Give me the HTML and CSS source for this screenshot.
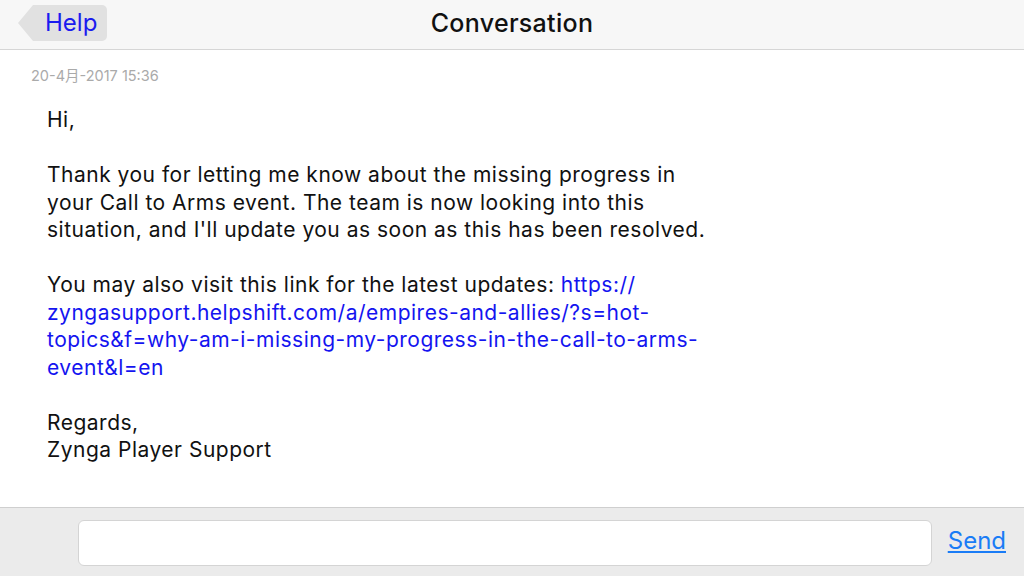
FILE: index.html
```html
<!DOCTYPE html>
<html>
  <head>
    <title>Conversation</title>
    <link rel="stylesheet" href="styles.css">
  </head>
  <body>
    <div class="page">
      <header class="topbar">
        <a class="backBtn" href="#">Help</a>
        <h1>Conversation</h1>
      </header>
      <section class="thread">
        <div class="stamp">20-4月-2017 15:36</div>
        <div class="message">
          <p>Hi,</p>
          <p>Thank you for letting me know about the missing progress in<br>
          your Call to Arms event. The team is now looking into this<br>
          situation, and I'll update you as soon as this has been resolved.</p>
          <p>You may also visit this link for the latest updates: <a href="#">https://<br>
          zyngasupport.helpshift.com/a/empires-and-allies/?s=hot-<br>
          topics&amp;f=why-am-i-missing-my-progress-in-the-call-to-arms-<br>
          event&amp;l=en</a></p>
          <p>Regards,<br>
          Zynga Player Support</p>
        </div>
      </section>
      <footer class="composer">
        <input type="text" class="replyBox">
        <a class="sendBtn" href="#">Send</a>
      </footer>
    </div>
  </body>
</html>
```

FILE: styles.css
```css
body {
  margin: 0;
  font-family: 'Inter', 'Liberation Sans', 'Noto Sans CJK SC', sans-serif;
  background: #fff;
}
.page {
  display: flex;
  flex-direction: column;
  height: 576px;
}
.topbar {
  height: 49px;
  flex: none;
  background: #f7f7f7;
  border-bottom: 1px solid #d6d6d6;
  display: flex;
  align-items: center;
  position: relative;
}
.topbar h1 {
  position: absolute;
  left: 0;
  right: 0;
  top: 0;
  margin: 0;
  line-height: 47px;
  text-align: center;
  font-size: 25px;
  font-weight: 500;
  letter-spacing: 0.3px;
  color: #111;
  pointer-events: none;
}
.backBtn {
  position: relative;
  z-index: 1;
  margin-left: 33px;
  margin-top: -4px;
  height: 36px;
  line-height: 36px;
  padding: 0 10px 0 12px;
  background: #e1e1e1;
  border-radius: 0 5px 5px 0;
  color: #1b1bef;
  font-size: 24px;
  text-decoration: none;
}
.backBtn::before {
  content: "";
  position: absolute;
  left: -15px;
  top: 0;
  border-right: 15px solid #e1e1e1;
  border-top: 18px solid transparent;
  border-bottom: 18px solid transparent;
}
.thread {
  flex: 1;
  padding: 0 0 0 31px;
  overflow: hidden;
}
.stamp {
  margin-top: 14px;
  font-size: 14.5px;
  color: #aaa;
}
.message {
  padding-left: 16px;
  margin-top: 21px;
  font-size: 21px;
  line-height: 27.5px;
  letter-spacing: 0.5px;
  color: #111;
}
.message p {
  margin: 0 0 27.5px 0;
  white-space: nowrap;
}
.message a {
  color: #1414f0;
  text-decoration: none;
}
.composer {
  flex: none;
  height: 68px;
  background: #ebebeb;
  border-top: 1px solid #cfcfcf;
  display: flex;
  align-items: center;
  padding: 0 18px 0 78px;
  gap: 16px;
}
.replyBox {
  flex: 1;
  height: 46px;
  box-sizing: border-box;
  margin-top: 1px;
  border: 1px solid #d4d4d4;
  border-radius: 6px;
  background: #fff;
  outline: none;
}
.sendBtn {
  font-size: 24px;
  color: #1a7cf6;
  text-decoration: underline;
  margin-top: -3px;
}
```
